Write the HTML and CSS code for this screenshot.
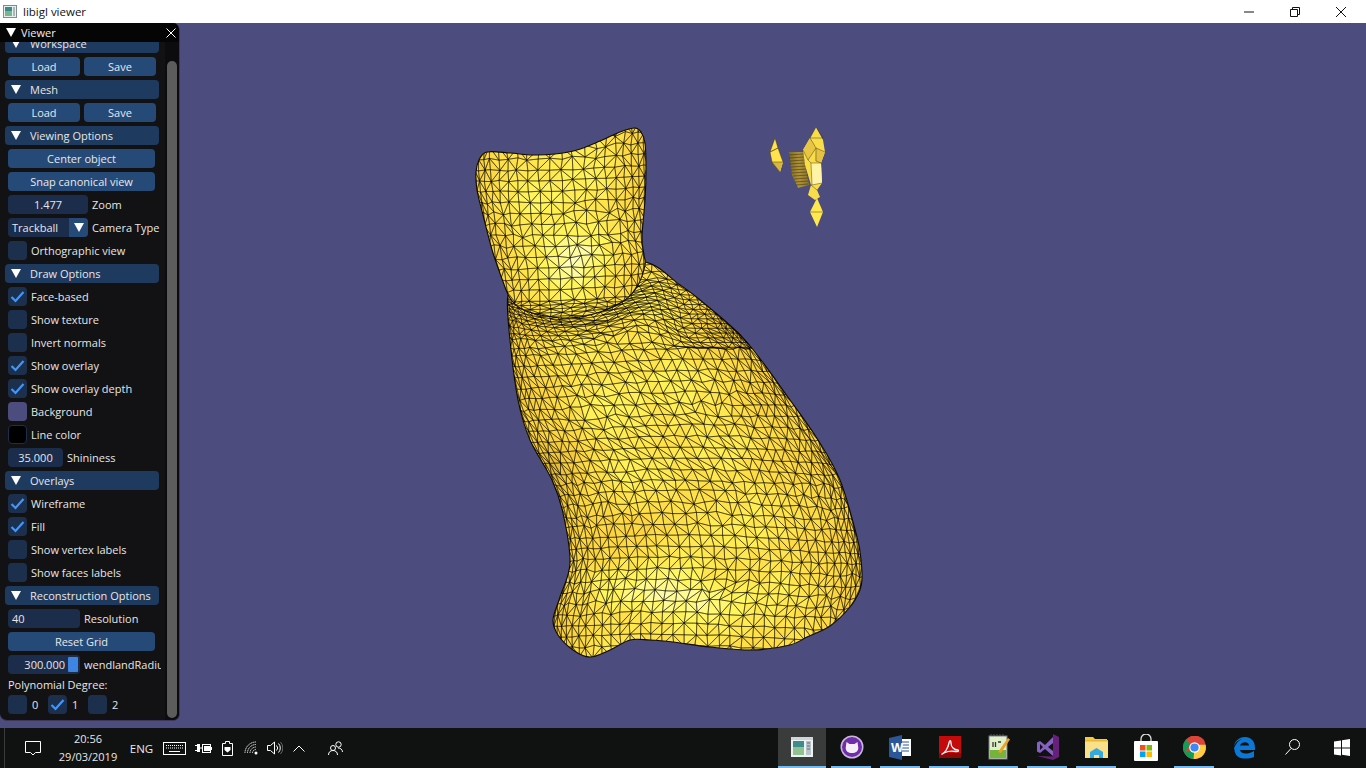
FILE: index.html
```html
<!DOCTYPE html>
<html lang="en">
<head>
<meta charset="utf-8">
<title>libigl viewer</title>
<link rel="stylesheet" href="styles.css">
</head>
<body>
<header class="titlebar">
  <svg class="app-icon" width="14" height="13" viewBox="0 0 14 13"><rect x=".5" y=".5" width="13" height="12" fill="#e8eeee" stroke="#7c8c90"/><rect x="2" y="2" width="7" height="9" fill="#3d8a8a"/><rect x="2" y="6" width="7" height="5" fill="#7ab58c"/><rect x="10" y="2" width="2" height="9" fill="#a9b6ba"/></svg>
  <span class="title-text">libigl viewer</span>
  <div class="win-buttons">
    <span class="win-btn"><svg width="12" height="12" viewBox="0 0 12 12"><path d="M1 6h10" stroke="#111" fill="none"/></svg></span>
    <span class="win-btn"><svg width="12" height="12" viewBox="0 0 12 12"><path d="M1.500 3.500h7v7h-7zM3.500 3.500v-2h7v7h-2" stroke="#111" fill="none"/></svg></span>
    <span class="win-btn"><svg width="12" height="12" viewBox="0 0 12 12"><path d="M1 1l10 10M11 1L1 11" stroke="#111" fill="none"/></svg></span>
  </div>
</header>

<main class="viewport">
  <svg id="scene" class="scene" width="1366" height="705" viewBox="0 23 1366 705">
    <defs>
      <linearGradient id="fragDark" x1="0" x2="1"><stop offset="0" stop-color="#7d6a24"/><stop offset=".5" stop-color="#b0923a"/><stop offset="1" stop-color="#8a7428"/></linearGradient>
    </defs>
    <g class="frag">
      <path fill="url(#fragDark)" d="M789 152l14 0 6 33-11 3-6-13z"/>
      <path class="frag-stripes" d="M789 155l14-1M789 158l15-1M790 161l15-1M790 164l15-1M791 167l15-1M791 170l16-1M792 173l15-1M793 176l15-1M794 179l14-1M795 182l13-1M796 185l12-1"/>
      <path fill="#ffe24c" d="M775 138l3 10 5 14-3 10-8-10-2-10z"/>
      <path fill="#d9b63c" d="M772 162l11 0-3 10z"/>
      <path class="frag-line" d="M775 138l-5 14 8-4zM770 152l2 10 11 0-5-14zM772 162l8 10"/>
      <path fill="#f8dc4a" d="M816 127l7 13 2 12-4 11 1 20-5 7 3 7-5 3-7-5 3-10-6-20-2-15 7-12z"/>
      <path fill="#ffe84e" d="M817 198l6 14-6 15-7-15z"/>
      <path fill="#fff3a8" d="M811 163l10 0 1 20-10 2z"/>
      <path fill="#e8c644" d="M803 150l7-12 6 10-8 12z"/>
      <path fill="#e6c242" d="M816 148l9 4-4 11-6-2z"/>
      <path class="frag-line" d="M816 127l-6 11h13zM810 138l6 10 9 4M816 148l-8 12 -5-10M808 160l3 3h10l-5-2 0-13M811 163l1 22 10-2M812 185l-1 0 6 5M810 212l13 0"/>
    </g>
  </svg>

  <section class="panel">
    <div class="panel-title">
      <svg class="arrow arrow-title" width="10" height="9" viewBox="0 0 10 9"><path d="M0 0h10L5 9z"/></svg>
      <span>Viewer</span>
      <svg class="close-x" width="10" height="10" viewBox="0 0 10 10"><path d="M.5.500l9 9M9.500.500l-9 9" stroke="#fff" fill="none"/></svg>
    </div>
    <div class="panel-body">
      <div class="rows">
        <div class="hdr"><svg class="arrow" width="10" height="9" viewBox="0 0 10 9"><path d="M0 0h10L5 9z"/></svg>Workspace</div>
        <div class="row two"><button class="btn">Load</button><button class="btn">Save</button></div>
        <div class="hdr"><svg class="arrow" width="10" height="9" viewBox="0 0 10 9"><path d="M0 0h10L5 9z"/></svg>Mesh</div>
        <div class="row two"><button class="btn">Load</button><button class="btn">Save</button></div>
        <div class="hdr"><svg class="arrow" width="10" height="9" viewBox="0 0 10 9"><path d="M0 0h10L5 9z"/></svg>Viewing Options</div>
        <div class="row"><button class="btn full">Center object</button></div>
        <div class="row"><button class="btn full">Snap canonical view</button></div>
        <div class="row"><span class="input w80 center">1.477</span><span class="lbl">Zoom</span></div>
        <div class="row"><span class="combo"><span class="combo-val">Trackball</span><span class="combo-btn"><svg width="10" height="9" viewBox="0 0 10 9"><path d="M0 0h10L5 9z" fill="#fff"/></svg></span></span><span class="lbl">Camera Type</span></div>
        <div class="row"><span class="check"></span><span class="lbl">Orthographic view</span></div>
        <div class="hdr"><svg class="arrow" width="10" height="9" viewBox="0 0 10 9"><path d="M0 0h10L5 9z"/></svg>Draw Options</div>
        <div class="row"><span class="check"><svg viewBox="0 0 19 19"><path d="M3.500 10l4 4L15.500 5" class="tick"/></svg></span><span class="lbl">Face-based</span></div>
        <div class="row"><span class="check"></span><span class="lbl">Show texture</span></div>
        <div class="row"><span class="check"></span><span class="lbl">Invert normals</span></div>
        <div class="row"><span class="check"><svg viewBox="0 0 19 19"><path d="M3.500 10l4 4L15.500 5" class="tick"/></svg></span><span class="lbl">Show overlay</span></div>
        <div class="row"><span class="check"><svg viewBox="0 0 19 19"><path d="M3.500 10l4 4L15.500 5" class="tick"/></svg></span><span class="lbl">Show overlay depth</span></div>
        <div class="row"><span class="check swatch-bg"></span><span class="lbl">Background</span></div>
        <div class="row"><span class="check swatch-line"></span><span class="lbl">Line color</span></div>
        <div class="row"><span class="input w55 center">35.000</span><span class="lbl">Shininess</span></div>
        <div class="hdr"><svg class="arrow" width="10" height="9" viewBox="0 0 10 9"><path d="M0 0h10L5 9z"/></svg>Overlays</div>
        <div class="row"><span class="check"><svg viewBox="0 0 19 19"><path d="M3.500 10l4 4L15.500 5" class="tick"/></svg></span><span class="lbl">Wireframe</span></div>
        <div class="row"><span class="check"><svg viewBox="0 0 19 19"><path d="M3.500 10l4 4L15.500 5" class="tick"/></svg></span><span class="lbl">Fill</span></div>
        <div class="row"><span class="check"></span><span class="lbl">Show vertex labels</span></div>
        <div class="row"><span class="check"></span><span class="lbl">Show faces labels</span></div>
        <div class="hdr"><svg class="arrow" width="10" height="9" viewBox="0 0 10 9"><path d="M0 0h10L5 9z"/></svg>Reconstruction Options</div>
        <div class="row"><span class="input w72 left">40</span><span class="lbl">Resolution</span></div>
        <div class="row"><button class="btn full">Reset Grid</button></div>
        <div class="row"><span class="input w72 slider"><span class="slider-val">300.000</span><span class="grab"></span></span><span class="lbl clip">wendlandRadiu</span></div>
        <div class="plain">Polynomial Degree:</div>
        <div class="row degrees">
          <span class="deg"><span class="check"></span><span class="lbl">0</span></span>
          <span class="deg"><span class="check"><svg viewBox="0 0 19 19"><path d="M3.500 10l4 4L15.500 5" class="tick"/></svg></span><span class="lbl">1</span></span>
          <span class="deg"><span class="check"></span><span class="lbl">2</span></span>
        </div>
      </div>
    </div>
    <div class="scroll-track"><div class="scroll-thumb"></div></div>
  </section>
</main>

<footer class="taskbar">
  <div class="tray">
    <span class="sep"></span>
    <span class="t w-notify"><svg width="18" height="18" viewBox="0 0 18 18"><path d="M1.500 2.500h15v11h-5l-2.500 2.500-2.500-2.500h-5z" class="ts"/></svg></span>
    <span class="clock"><span>20:56</span><span>29/03/2019</span></span>
    <span class="t w-eng">ENG</span>
    <span class="t w-kbd"><svg width="23" height="13" viewBox="0 0 23 13"><rect x=".5" y=".5" width="22" height="12" class="ts"/><path d="M3 3.500h17M3 6h17" stroke="#fff" stroke-dasharray="1 1" fill="none"/><path d="M6 9.500h11" stroke="#fff" fill="none"/></svg></span>
    <span class="t w-plug"><svg width="17" height="13" viewBox="0 0 17 13"><path d="M0 3.500h2M0 8.500h2" class="ts"/><rect x="2" y="2" width="3" height="8" fill="#fff"/><path d="M5 6h2" class="ts"/><rect x="7.500" y="2.500" width="8" height="8" class="ts"/><rect x="9" y="4" width="6" height="5" fill="#fff"/><path d="M16.500 5v3" class="ts"/></svg></span>
    <span class="t w-batt"><svg width="11" height="16" viewBox="0 0 11 16"><path d="M3.500 1.500h4v2h3v12H.5v-12h3z" class="ts"/><path d="M2.500 7h6v3l-3 2.500-3-2.500z" fill="#fff"/></svg></span>
    <span class="t w-wifi"><svg width="14" height="14" viewBox="0 0 14 14"><path d="M1 12A11 11 0 0 1 12 1M3.500 12A8.500 8.500 0 0 1 12 3.500M6 12a6 6 0 0 1 6-6M8.500 12a3.500 3.500 0 0 1 3.500-3.500" fill="none" stroke="#e0e0e0" stroke-dasharray="1.500 .5"/><circle cx="12" cy="12" r="1.500" fill="#fff"/></svg></span>
    <span class="t w-snd"><svg width="16" height="14" viewBox="0 0 16 14"><path d="M.5 4.500h3L7.500 1v12l-4-3.500h-3z" class="ts"/><path d="M9.500 4.500a3.500 3.500 0 0 1 0 5" class="ts"/><path d="M11.500 2.500a6.500 6.500 0 0 1 0 9" class="ts"/><path d="M13.500 1a9 9 0 0 1 0 12" fill="none" stroke="#666"/></svg></span>
    <span class="t w-chev"><svg width="12" height="7" viewBox="0 0 12 7"><path d="M.5 6.500L6 1l5.500 5.500" class="ts"/></svg></span>
    <span class="t w-ppl"><svg width="15" height="15" viewBox="0 0 15 15"><circle cx="10.500" cy="3.500" r="2.700" class="ts"/><circle cx="5" cy="7" r="2.500" class="ts"/><path d="M.5 14c0-3 2-4.500 4.500-4.500S9.500 11 9.500 14M10 7c2.500 0 4.500 1.500 4.500 4" class="ts"/></svg></span>
  </div>
  <div class="apps">
    <span class="app active run"><svg width="22" height="22" viewBox="0 0 22 22"><rect x="0" y="1" width="22" height="20" fill="#eef2f2"/><rect x="0" y="1" width="22" height="3" fill="#cfd6d8"/><rect x="2" y="5" width="11" height="14" fill="#3e8c8c"/><rect x="2" y="11" width="11" height="8" fill="#8fc28f"/><rect x="15" y="5" width="5" height="14" fill="#b8c4c8"/><path d="M16 7h3M16 10h3M16 13h3" stroke="#5d7078"/></svg></span>
    <span class="app run"><svg width="24" height="24" viewBox="0 0 24 24"><circle cx="12" cy="12" r="11.500" fill="#c9b8de"/><circle cx="12" cy="12" r="10" fill="#6f2da8"/><path d="M6.500 7l3 2h5l3-2 .8 6c0 3-2.500 5-6.300 5s-6.300-2-6.300-5z" fill="#f4eef8"/></svg></span>
    <span class="app run"><svg width="23" height="25" viewBox="0 0 23 25"><rect x="9" y="4" width="13" height="17" fill="#fff"/><path d="M12 7h8M12 10h8M12 13h8M12 16h8" stroke="#2b579a"/><path d="M0 3l13-3v25L0 22z" fill="#2b579a"/><text x="2" y="16.500" class="word-w">W</text></svg></span>
    <span class="app run"><svg width="22" height="22" viewBox="0 0 22 22"><rect width="22" height="22" fill="#c40a0a"/><rect y="17" width="22" height="5" fill="#8f0707"/><path d="M3 18c3-1 6-6 7-11 .5-3 2-3 2 0 0 4 3 7 7 7 1 1 0 2-2 1.500-4-.8-8-.5-11 1-2 1-3.500 2-3 1.500z" fill="none" stroke="#fff" stroke-width="1.300"/></svg></span>
    <span class="app run"><svg width="22" height="26" viewBox="0 0 22 26"><rect x="1" y="2" width="18" height="23" fill="#dff0c8" stroke="#778"/><rect x="2" y="16" width="16" height="8" fill="#76b33a"/><path d="M3 2v-2M6 2v-2M9 2v-2M12 2v-2M15 2v-2" stroke="#556"/><path d="M5 8v5M7.500 8v5M10 8h3" stroke="#333" stroke-width="1.300"/><path d="M10 18L20 4l2 1.500L13 19z" fill="#f0a020"/></svg></span>
    <span class="app run"><svg width="24" height="26" viewBox="0 0 24 26"><path d="M17 0l6 3v20l-6 3-16-4 16 .5z" fill="#68217a"/><path d="M17 3v19L9 15l-5 4-3-1.500V8.500L4 7l5 4zM4 10v6l3-3zm13-1l-5 4 5 4z" fill="#8661c5" fill-rule="evenodd"/></svg></span>
    <span class="app run"><svg width="23" height="22" viewBox="0 0 23 22"><path d="M0 1h8l2 2h12v5H0z" fill="#f5c842"/><rect y="4" width="23" height="18" fill="#fbe08a"/><path d="M5 22v-6l6.500-4 6.500 4v6h-4v-3H9v3z" fill="#35a8e0"/><rect x="0" y="4" width="23" height="1.500" fill="#e8b830"/></svg></span>
    <span class="app"><svg width="24" height="27" viewBox="0 0 24 27"><path d="M7 8V5a5 5 0 0 1 10 0v3" fill="none" stroke="#ddd" stroke-width="1.300"/><rect y="7" width="24" height="20" rx="1" fill="#fff"/><rect x="6" y="11" width="5.500" height="5.500" fill="#f25022"/><rect x="12.500" y="11" width="5.500" height="5.500" fill="#7fba00"/><rect x="6" y="17.500" width="5.500" height="5.500" fill="#00a4ef"/><rect x="12.500" y="17.500" width="5.500" height="5.500" fill="#ffb900"/></svg></span>
    <span class="app run"><svg width="23" height="23" viewBox="0 0 24 24"><circle cx="12" cy="12" r="12" fill="#db4437"/><path d="M12 12L1.600 18A12 12 0 0 0 12 24h1l6-12z" fill="#0f9d58"/><path d="M12 12l-1 12A12 12 0 0 0 23.500 9H12z" fill="#ffcd40"/><path d="M12 6h10.900A12 12 0 0 0 3 4l4 7z" fill="#db4437"/><path d="M1.600 18L7.500 8.500 3 4A12 12 0 0 0 1.600 18z" fill="#0f9d58"/><circle cx="12" cy="12" r="5.500" fill="#fff"/><circle cx="12" cy="12" r="4.300" fill="#4285f4"/></svg></span>
    <span class="app"><svg width="22" height="23" viewBox="0 0 22 23"><path d="M1 12C1 5 6 1 12 1c6 0 10 4 10 11v2H7c.5 4 7 5 14 1v6c-8 3-18 2-19-5-.5 1 0-1-1-4zM7 9.500h9C16 5.500 8.500 5 7 9.500zM1 12C3 7 6 4 9 3 5 4 1 7 1 12z" fill="#0a78d4" fill-rule="evenodd"/></svg></span>
    <span class="app"><svg width="15" height="16" viewBox="0 0 15 16"><circle cx="9.500" cy="5.500" r="5" class="ts"/><path d="M6 9.500L.5 15.500" class="ts" stroke-width="1.300"/></svg></span>
    <span class="app"><svg width="16" height="17" viewBox="0 0 16 17"><path d="M0 2.500l7-1v7H0zM8 1.300L16 0v8.500H8zM0 9.500h7v7l-7-1zM8 9.500h8V17l-8-1.200z" fill="#fff"/></svg></span>
  </div>
</footer>
<script src="mesh.js"></script>
</body>
</html>
```
FILE: styles.css
```css
* { box-sizing: border-box; }
html, body { margin: 0; padding: 0; height: 100%; overflow: hidden; }
body {
  width: 1366px; height: 768px;
  display: flex; flex-direction: column;
  font-family: "Open Sans", "Liberation Sans", sans-serif;
  background: #4c4c7f;
}
.titlebar {
  height: 23px; flex: none;
  display: flex; align-items: center;
  background: #fff; color: #111;
  font-size: 11.500px;
  padding-left: 3px;
}
.app-icon { flex: none; }
.title-text { margin-left: 6px; }
.win-buttons { margin-left: auto; display: flex; margin-right: 2px; }
.win-btn { width: 46px; height: 23px; display: flex; align-items: center; justify-content: center; }

.viewport { position: relative; flex: 1; background: #4c4c7f; overflow: hidden; }
.scene { position: absolute; left: 0; top: 0; }
.frag-line { fill: none; stroke: #3a3210; stroke-width: .6; stroke-opacity: .75; }
.frag-stripes { fill: none; stroke: #2e2708; stroke-width: .7; stroke-opacity: .7; }

.panel {
  position: absolute; left: 0; top: 0;
  width: 180px; height: 698px;
  background: #121214;
  border: 1px solid #3a3a58;
  border-top: 0; border-left: 0;
  border-radius: 0 7px 7px 7px;
  overflow: hidden;
  color: #e6e6e6;
  font-size: 11px;
  line-height: 19px;
}
.panel-title {
  height: 19px;
  background: #050505;
  color: #eee;
  display: flex; align-items: center;
  padding-left: 6px;
  position: relative;
  z-index: 2;
}
.arrow { fill: #fff; margin-right: 9px; flex: none; }
.arrow-title { margin-right: 5px; }
.close-x { margin-left: auto; margin-right: 3px; }
.panel-body { height: 678px; overflow: hidden; }
.rows {
  margin-top: -8px;
  padding-left: 5px;
  width: 160px;
  display: flex; flex-direction: column; gap: 4px;
}
.hdr {
  height: 19px; width: 154px;
  background: #1e3a5e;
  border-radius: 4px;
  padding-left: 6px;
  display: flex; align-items: center;
  white-space: nowrap;
  flex: none;
}
.row { height: 19px; flex: none; display: flex; align-items: center; padding-left: 3px; white-space: nowrap; }
.two { gap: 4px; }
.btn {
  height: 19px; width: 72px; padding: 0;
  border: 0; border-radius: 4px;
  background: #254a78;
  color: #e8e8e8;
  font: inherit;
}
.btn.full { width: 147px; }
.input {
  height: 19px; flex: none;
  background: #1b2d4b;
  border-radius: 4px;
  display: flex; align-items: center;
}
.w80 { width: 80px; }
.w72 { width: 72px; }
.w55 { width: 55px; }
.center { justify-content: center; }
.left { padding-left: 4px; }
.lbl { margin-left: 4px; flex: none; }
.clip { width: 77px; overflow: hidden; }
.combo { width: 80px; height: 19px; flex: none; display: flex; border-radius: 4px; overflow: hidden; background: #1b2d4b; }
.combo-val { flex: 1; padding-left: 4px; }
.combo-btn { width: 19px; background: #254a78; display: flex; align-items: center; justify-content: center; }
.check { width: 19px; height: 19px; flex: none; background: #1c2f4d; border-radius: 4px; display: block; }
.check svg { display: block; width: 19px; height: 19px; }
.check + .lbl { margin-left: 4px; }
.tick { fill: none; stroke: #4296fa; stroke-width: 2.200; }
.swatch-bg { background: #4c4c7f; }
.swatch-line { background: #000; border: 1px solid #1c2f4d; }
.slider { position: relative; justify-content: flex-end; padding-right: 15px; }
.grab { position: absolute; right: 2px; top: 2px; width: 10px; height: 15px; background: #3d85e0; border-radius: 1px; }
.plain { height: 13px; line-height: 13px; padding-left: 3px; flex: none; }
.degrees { gap: 15px; }
.deg { display: flex; align-items: center; width: 25px; }
.deg .lbl { margin-left: 5px; }
.scroll-track {
  position: absolute; right: 0; top: 19px; bottom: 0; width: 14px;
  background: #0c0c0e;
  padding: 19px 2px 2px 2px;
}
.scroll-thumb { height: 100%; width: 10px; background: #5c5c5c; border-radius: 5px; }

.taskbar {
  height: 40px; flex: none;
  background: #101111;
  color: #e8e8e8;
  display: flex; align-items: stretch;
  font-size: 11px;
}
.tray { display: flex; align-items: center; }
.sep { width: 1px; height: 40px; background: #3a3a3a; margin-left: 4px; }
.t { display: flex; align-items: center; justify-content: center; height: 40px; flex: none; }
.w-notify { width: 56px; }
.w-eng { width: 41px; margin-left: 6px; font-size: 11.500px; }
.w-kbd { width: 25px; }
.w-plug { width: 32px; }
.w-batt { width: 16px; }
.w-wifi { width: 32px; }
.w-snd { width: 16px; }
.w-chev { width: 32px; }
.w-ppl { width: 40px; }
.clock { width: 54px; flex: none; display: flex; flex-direction: column; align-items: center; line-height: 18px; white-space: nowrap; }
.ts { fill: none; stroke: #fff; stroke-width: 1; }
.apps { margin-left: auto; display: flex; }
.app { width: 49px; height: 40px; display: flex; align-items: center; justify-content: center; position: relative; padding-bottom: 2px; }
.app.active { background: #3a3b3b; width: 48px; margin-right: 1px; }
.app.run::after {
  content: ""; position: absolute; bottom: 0; left: 4px; right: 5px; height: 2px; background: #76b9ed;
}
.app.active::after { left: 0; right: 0; }
.word-w { font: bold 13px "Liberation Sans", sans-serif; fill: #fff; }
```
FILE: mesh.js
```js
(function () {
  var NS = 'http://www.w3.org/2000/svg';
  var svg = document.getElementById('scene');
  var seed = 12345;
  function rnd() { seed = (seed * 16807) % 2147483647; return seed / 2147483647; }
  function sstep(a, b, x) { var t = Math.max(0, Math.min(1, (x - a) / (b - a))); return t * t * (3 - 2 * t); }
  function lerpTable(t, y) {
    if (y <= t[0][0]) return t[0][1];
    for (var i = 1; i < t.length; i++) {
      if (y <= t[i][0]) {
        var a = t[i - 1], b = t[i], k = (y - a[0]) / (b[0] - a[0]);
        return a[1] + (b[1] - a[1]) * k;
      }
    }
    return t[t.length - 1][1];
  }
  function smooth(pts) {
    var n = pts.length, d = 'M' + pts[0][0] + ' ' + pts[0][1];
    for (var i = 0; i < n; i++) {
      var p0 = pts[(i - 1 + n) % n], p1 = pts[i], p2 = pts[(i + 1) % n], p3 = pts[(i + 2) % n];
      d += 'C' + (p1[0] + (p2[0] - p0[0]) / 6).toFixed(1) + ' ' + (p1[1] + (p2[1] - p0[1]) / 6).toFixed(1) + ' ' +
        (p2[0] - (p3[0] - p1[0]) / 6).toFixed(1) + ' ' + (p2[1] - (p3[1] - p1[1]) / 6).toFixed(1) + ' ' + p2[0] + ' ' + p2[1];
    }
    return d + 'Z';
  }
  function ramp(v) {
    var stops = [[0, [120, 96, 24]], [0.35, [205, 165, 50]], [0.6, [250, 208, 62]], [0.78, [255, 226, 74]], [0.92, [255, 246, 92]], [1.1, [255, 253, 185]]];
    v = Math.max(0, Math.min(1.1, v));
    for (var i = 1; i < stops.length; i++) {
      if (v <= stops[i][0]) {
        var a = stops[i - 1], b = stops[i], k = (v - a[0]) / (b[0] - a[0]);
        return 'rgb(' + [0, 1, 2].map(function (c) { return Math.round(a[1][c] + (b[1][c] - a[1][c]) * k); }).join(',') + ')';
      }
    }
  }
  function spot(x, y, cx, cy, rx, ry, a) {
    var dx = (x - cx) / rx, dy = (y - cy) / ry;
    return a * Math.exp(-(dx * dx + dy * dy));
  }
  function shade(x, y, nz, spots) {
    var v = 0.5 + 0.32 * nz + 0.05 * Math.sin(x / 23 + y / 41) * Math.sin(y / 19 - x / 57);
    for (var i = 0; i < spots.length; i++) { var s = spots[i]; v += spot(x, y, s[0], s[1], s[2], s[3], s[4]); }
    return v + (rnd() - 0.5) * 0.09;
  }
  function build(o) {
    var g = document.createElementNS(NS, 'g');
    var defs = svg.querySelector('defs');
    var cp = document.createElementNS(NS, 'clipPath');
    cp.setAttribute('id', o.id);
    var outline = smooth(o.outline);
    var cpp = document.createElementNS(NS, 'path');
    cpp.setAttribute('d', outline);
    cp.appendChild(cpp);
    defs.appendChild(cp);
    g.setAttribute('clip-path', 'url(#' + o.id + ')');
    var under = document.createElementNS(NS, 'path');
    under.setAttribute('d', outline);
    under.setAttribute('fill', '#c9a238');
    g.appendChild(under);
    var grid = [];
    for (var j = 0; j < o.rows.length; j++) {
      var y = o.rows[j], L = lerpTable(o.L, y) - 5, R = lerpTable(o.R, y) + 5;
      var cx = (L + R) / 2, hw = (R - L) / 2;
      var row = [];
      for (var i = -o.cols; i <= o.cols; i++) {
        var s = Math.abs(i) * o.step;
        var ang = Math.min(s / (1.3 * hw), Math.PI / 2);
        var x = cx + hw * Math.sin(ang) * (i < 0 ? -1 : 1);
        var nz = Math.cos(ang);
        var dense = o.rowGap[j] < 7 ? 0.3 : 1;
        var patch = 0.5 + 1.8 * Math.abs(Math.sin(x / 37 + 1) * Math.sin(y / 29));
        var yy = y + 4 * Math.sin(x / 70 + y / 400) + o.jit * patch * (rnd() - 0.5) * 2 * dense;
        if (o.warp) yy = o.warp(x, yy, j);
        row.push([x + nz * o.jit * patch * (rnd() - 0.5) * 2, yy, nz]);
      }
      grid.push(row);
    }
    var strokes = '';
    for (j = 0; j < grid.length - 1; j++) {
      for (i = 0; i < grid[j].length - 1; i++) {
        var a = grid[j][i], b = grid[j][i + 1], c = grid[j + 1][i + 1], d = grid[j + 1][i];
        var flip = ((i + j) % 2 === 0) !== (rnd() < 0.12);
        var tris = flip ? [[a, b, c], [a, c, d]] : [[a, b, d], [b, c, d]];
        tris.forEach(function (t) {
          var mx = (t[0][0] + t[1][0] + t[2][0]) / 3, my = (t[0][1] + t[1][1] + t[2][1]) / 3;
          var mz = (t[0][2] + t[1][2] + t[2][2]) / 3;
          var p = document.createElementNS(NS, 'path');
          var dd = 'M' + t[0][0].toFixed(1) + ' ' + t[0][1].toFixed(1) + 'L' + t[1][0].toFixed(1) + ' ' + t[1][1].toFixed(1) + 'L' + t[2][0].toFixed(1) + ' ' + t[2][1].toFixed(1) + 'Z';
          var col = ramp(shade(mx, my, mz, o.spots));
          p.setAttribute('d', dd);
          p.setAttribute('fill', col);
          p.setAttribute('stroke', col);
          p.setAttribute('stroke-width', '.5');
          g.appendChild(p);
          strokes += dd;
        });
      }
    }
    var w = document.createElementNS(NS, 'path');
    w.setAttribute('d', strokes);
    w.setAttribute('fill', 'none');
    w.setAttribute('stroke', '#000');
    w.setAttribute('stroke-width', '.7');
    w.setAttribute('stroke-opacity', '.6');
    g.appendChild(w);
    svg.appendChild(g);
    var edge = document.createElementNS(NS, 'path');
    edge.setAttribute('d', outline);
    edge.setAttribute('fill', 'none');
    edge.setAttribute('stroke', '#0a0800');
    edge.setAttribute('stroke-width', o.edge || 1.1);
    svg.appendChild(edge);
  }
  function rowsFrom(start, list) {
    var r = [], gaps = [], y = start;
    for (var k = 0; k < list.length; k++) {
      var seg = list[k];
      while (y < seg[0]) { r.push(y); gaps.push(seg[1]); y += seg[1]; }
    }
    return { r: r, g: gaps };
  }
  var bodyRows = rowsFrom(262, [[298, 9], [326, 2.8], [338, 4], [352, 7], [680, 11]]);
  var denseN = 0;
  while (bodyRows.r[denseN] < 352) denseN++;
  build({
    id: 'clipBody', cols: 22, step: 15, jit: 1.2,
    rows: bodyRows.r, rowGap: bodyRows.g,
    warp: function (x, y, j) {
      if (j >= denseN) return y;
      var uni = 262 + j * (bodyRows.r[denseN] - 262) / denseN;
      var k = sstep(625, 690, x);
      var dy = Math.abs(x - 575) / 65;
      var curved = y - Math.min(1.6, dy * dy) * 13 * (1 - sstep(320, 350, y));
      return curved * (1 - k) + uni * k;
    },
    L: [[290, 508], [340, 510], [400, 518], [440, 530], [480, 552], [513, 563], [563, 570], [597, 560], [620, 553]],
    R: [[262, 645], [285, 680], [300, 700], [340, 745], [400, 790], [440, 818], [480, 840], [537, 857], [580, 862]],
    outline: [[560, 282], [522, 284], [508, 295], [510, 340], [518, 400], [530, 440], [552, 480], [563, 513], [570, 563], [560, 597], [553, 620], [558, 635], [573, 650], [590, 657], [610, 650], [630, 640], [650, 640], [673, 642], [710, 647], [753, 650], [790, 645], [807, 637], [830, 626], [850, 607], [860, 590], [862, 578], [861, 560], [857, 537], [840, 480], [818, 440], [790, 400], [745, 340], [700, 300], [680, 285], [645, 262], [600, 272]],
    spots: [[640, 590, 55, 22, 0.22], [700, 600, 60, 18, 0.12], [610, 470, 30, 20, 0.04], [650, 530, 35, 22, -0.14], [700, 470, 50, 30, -0.03],
      [540, 520, 30, 60, -0.08], [560, 460, 30, 40, -0.1], [720, 345, 40, 25, -0.08], [760, 430, 50, 60, -0.02], [570, 325, 70, 14, -0.1], [720, 640, 90, 10, -0.03], [630, 400, 80, 70, 0.04]]
  });
  var headRows = rowsFrom(122, [[288, 11], [322, 4]]);
  build({
    id: 'clipHead', cols: 14, step: 15, jit: 1.2,
    rows: headRows.r, rowGap: headRows.g,
    L: [[125, 476], [170, 476], [200, 480], [253, 493], [287, 505], [310, 512], [325, 520]],
    R: [[125, 646], [187, 647], [237, 644], [263, 646], [285, 640], [325, 630]],
    outline: [[476, 172], [479, 160], [487, 152], [510, 153], [533, 155], [555, 154], [577, 150], [600, 141], [620, 132], [635, 128], [641, 132], [645, 143], [646, 170], [645, 200], [642, 237], [644, 255], [645, 265], [638, 285], [625, 300], [600, 312], [570, 318], [540, 315], [520, 308], [510, 298], [505, 287], [493, 253], [483, 215], [477, 190]],
    spots: [[578, 262, 26, 30, 0.26], [545, 210, 40, 40, 0.1], [600, 200, 30, 30, 0.02], [580, 315, 60, 8, -0.06]]
  });
  svg.appendChild(svg.querySelector('.frag'));
})();
```
